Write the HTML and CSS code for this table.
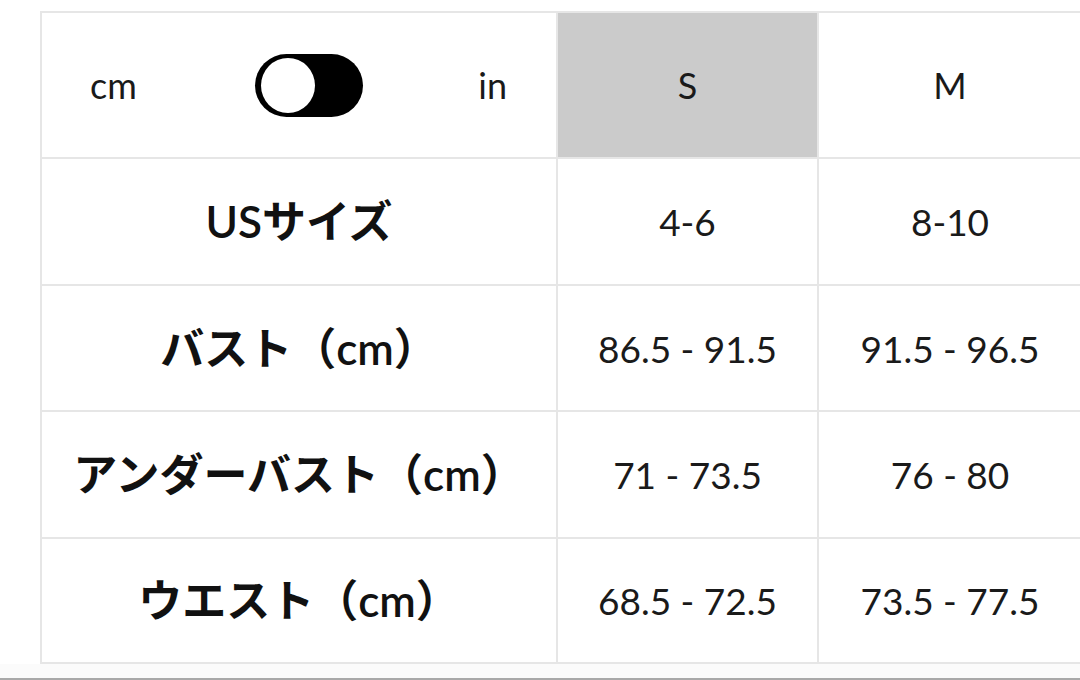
FILE: index.html
```html
<!DOCTYPE html>
<html lang="ja">
<head>
<meta charset="utf-8">
<link rel="stylesheet" href="styles.css">
</head>
<body>
<div class="page">
  <div class="chart">
    <div class="cell unit-cell">
      <span class="unit">cm</span>
      <span class="toggle" role="switch" aria-checked="false"></span>
      <span class="unit">in</span>
    </div>
    <div class="cell size active">S</div>
    <div class="cell size">M</div>

    <div class="cell label">USサイズ</div>
    <div class="cell value">4-6</div>
    <div class="cell value">8-10</div>

    <div class="cell label">バスト（cm）</div>
    <div class="cell value">86.5 - 91.5</div>
    <div class="cell value">91.5 - 96.5</div>

    <div class="cell label">アンダーバスト（cm）</div>
    <div class="cell value">71 - 73.5</div>
    <div class="cell value">76 - 80</div>

    <div class="cell label">ウエスト（cm）</div>
    <div class="cell value">68.5 - 72.5</div>
    <div class="cell value">73.5 - 77.5</div>
  </div>
  <div class="footer"></div>
</div>
</body>
</html>
```

FILE: styles.css
```css
html, body {
  margin: 0;
  padding: 0;
  background: #ffffff;
}

.page {
  width: 1080px;
  height: 680px;
  overflow: hidden;
  padding-top: 11px;
  box-sizing: border-box;
  font-family: "Lato", "Noto Sans CJK JP", sans-serif;
  color: #111111;
}

.chart {
  margin-left: 40px;
  width: 1043px;
  display: grid;
  grid-template-columns: 514px 259px 262px;
  grid-template-rows: 144px 125px 124px 125px 123px;
  gap: 2px;
  padding: 2px;
  box-sizing: border-box;
  background: #e6e6e6;
}

.cell {
  background: #ffffff;
  display: flex;
  align-items: center;
  justify-content: center;
}

.unit-cell {
  justify-content: space-between;
  padding: 0 49px 0 48px;
}

.unit {
  font-size: 36px;
  line-height: 1;
  color: #1a1a1a;
}

.toggle {
  position: relative;
  width: 108px;
  height: 63px;
  border-radius: 32px;
  background: #000000;
  margin-left: 2px;
}

.toggle::after {
  content: "";
  position: absolute;
  left: 6px;
  top: 4px;
  width: 54px;
  height: 55px;
  border-radius: 50%;
  background: #ffffff;
}

.size {
  font-size: 36px;
  color: #1a1a1a;
}

.size.active {
  background: #cbcbcb;
}

.label {
  font-weight: 600;
  font-size: 44px;
  padding-bottom: 5px;
  color: #111111;
}

.value {
  font-size: 37px;
  color: #1a1a1a;
}

.footer {
  height: 14px;
  border-bottom: 2px solid #a9a9a9;
  background: #fbfbfb;
}
```
